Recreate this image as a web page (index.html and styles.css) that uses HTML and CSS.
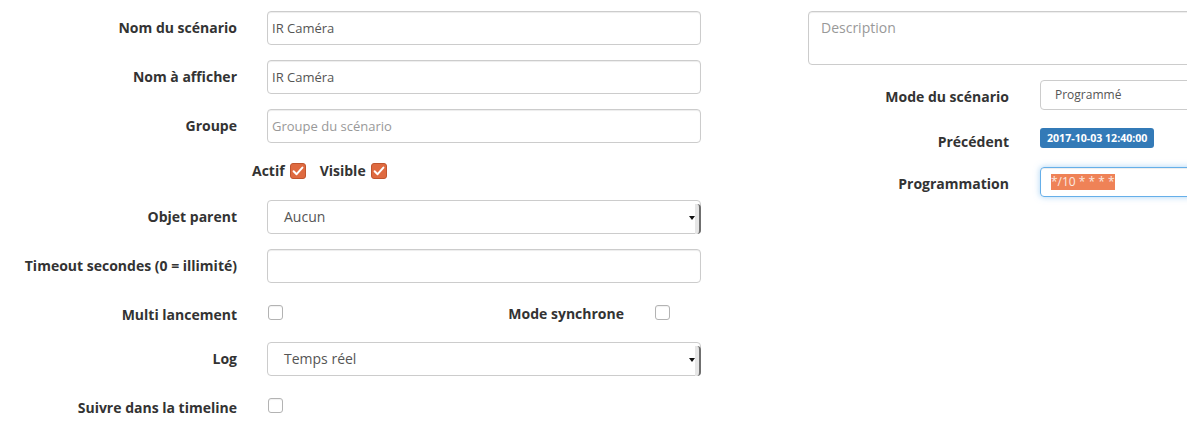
FILE: index.html
```html
<!DOCTYPE html>
<html lang="fr">
<head>
<meta charset="utf-8">
<title>Scénario</title>
<link rel="stylesheet" href="styles.css">
</head>
<body>
<div class="page">
  <div class="left">
    <div class="row">
      <label class="lbl">Nom du scénario</label>
      <div class="ctl"><input class="input" type="text" value="IR Caméra"></div>
    </div>
    <div class="row">
      <label class="lbl">Nom à afficher</label>
      <div class="ctl"><input class="input" type="text" value="IR Caméra"></div>
    </div>
    <div class="row">
      <label class="lbl">Groupe</label>
      <div class="ctl"><input class="input" type="text" placeholder="Groupe du scénario"></div>
    </div>
    <div class="row row-checks">
      <span class="inline-lbl">Actif</span>
      <span class="cb checked"><svg viewBox="0 0 16 16" width="16" height="16"><path d="M3.6 8.2 L6.6 11.2 L12.4 4.6" fill="none" stroke="#fff" stroke-width="2" stroke-linecap="round" stroke-linejoin="round"/></svg></span>
      <span class="inline-lbl second">Visible</span>
      <span class="cb checked"><svg viewBox="0 0 16 16" width="16" height="16"><path d="M3.6 8.2 L6.6 11.2 L12.4 4.6" fill="none" stroke="#fff" stroke-width="2" stroke-linecap="round" stroke-linejoin="round"/></svg></span>
    </div>
    <div class="row">
      <label class="lbl">Objet parent</label>
      <div class="ctl"><div class="select">Aucun</div></div>
    </div>
    <div class="row">
      <label class="lbl">Timeout secondes (0 = illimité)</label>
      <div class="ctl"><input class="input" type="text" value=""></div>
    </div>
    <div class="row row-cb">
      <label class="lbl">Multi lancement</label>
      <div class="ctl ctl-cb">
        <span class="cb"></span>
        <span class="spacer"></span>
        <span class="sub-lbl">Mode synchrone</span>
        <span class="cb cb-sync"></span>
      </div>
    </div>
    <div class="row">
      <label class="lbl">Log</label>
      <div class="ctl"><div class="select">Temps réel</div></div>
    </div>
    <div class="row row-cb">
      <label class="lbl">Suivre dans la timeline</label>
      <div class="ctl ctl-cb"><span class="cb"></span></div>
    </div>
  </div>
  <div class="right">
    <div class="desc">Description</div>
    <div class="rrow">
      <label class="rlbl">Mode du scénario</label>
      <div class="rselect">Programmé</div>
    </div>
    <div class="rrow">
      <label class="rlbl">Précédent</label>
      <div><span class="badge">2017-10-03 12:40:00</span></div>
    </div>
    <div class="rrow">
      <label class="rlbl">Programmation</label>
      <div class="rinput focus"><span class="sel">*/10 * * * *</span></div>
    </div>
  </div>
</div>
</body>
</html>
```

FILE: styles.css
```css
html, body {
  margin: 0;
  padding: 0;
  background: #fff;
}
body {
  font-family: "Open Sans", "DejaVu Sans", sans-serif;
  color: #333;
  overflow: hidden;
}
.page {
  display: flex;
  padding-top: 11px;
  width: 1187px;
  height: 430px;
  box-sizing: border-box;
  overflow: hidden;
}
.left {
  width: 716px;
  flex: 0 0 716px;
}
.row {
  display: flex;
  margin-bottom: 15px;
}
.lbl {
  flex: 0 0 237px;
  width: 237px;
  text-align: right;
  font-weight: 700;
  font-size: 14px;
  line-height: 20px;
  padding-top: 7px;
  margin-right: 30px;
  white-space: nowrap;
}
.ctl {
  flex: 0 0 434px;
  width: 434px;
}
.input {
  display: block;
  width: 100%;
  height: 34px;
  margin: 0;
  box-sizing: border-box;
  border: 1px solid #ccc;
  border-radius: 4px;
  padding: 0 4px;
  font-family: "Open Sans", sans-serif;
  font-size: 13px;
  color: #555;
  background: #fff;
  box-shadow: inset 0 1px 1px rgba(0,0,0,.075);
  outline: none;
}
.input::placeholder {
  color: #999;
}
.select {
  position: relative;
  height: 34px;
  box-sizing: border-box;
  border: 1px solid #ccc;
  border-radius: 4px;
  padding-left: 16px;
  font-size: 14px;
  line-height: 32px;
  color: #555;
  background: #fff;
}
.select::before {
  content: "";
  position: absolute;
  right: -1px;
  top: 3px;
  bottom: -1px;
  width: 4px;
  background: #e6e6e6;
  border-right: 2px solid #6f6f6f;
  border-radius: 0 4px 4px 0;
}
.select::after {
  content: "";
  position: absolute;
  right: 5px;
  top: 15px;
  border-left: 3px solid transparent;
  border-right: 3px solid transparent;
  border-top: 4px solid #111;
}
.row-checks {
  height: 27px;
  align-items: center;
  padding-left: 252px;
  margin-top: -1px;
  margin-bottom: 16px;
}
.inline-lbl {
  font-weight: 700;
  font-size: 14px;
  line-height: 20px;
  margin-right: 5px;
}
.inline-lbl.second {
  margin-left: 14px;
}
.cb {
  display: inline-block;
  width: 15px;
  height: 15px;
  box-sizing: border-box;
  border: 1px solid #b3b3b3;
  border-radius: 3px;
  background: #fff;
  box-shadow: inset 0 1px 1px rgba(0,0,0,.06);
  flex: 0 0 auto;
}
.cb.checked {
  width: 16px;
  height: 16px;
  background: #df6a40;
  border-color: #c0552f;
  box-shadow: none;
}
.cb.checked svg {
  display: block;
  margin: -1px;
}
.row-cb {
  height: 29px;
}
.ctl-cb {
  display: flex;
  align-items: flex-start;
  padding-top: 7px;
  padding-left: 1px;
  box-sizing: border-box;
}
.spacer {
  flex: 1;
}
.sub-lbl {
  font-weight: 700;
  font-size: 14px;
  line-height: 20px;
  margin-top: -1px;
  margin-right: 31px;
}
.cb-sync {
  margin-right: 31px;
}
.right {
  margin-left: 92px;
  flex: 0 0 420px;
  width: 420px;
}
.desc {
  height: 54px;
  box-sizing: border-box;
  border: 1px solid #ccc;
  border-radius: 4px;
  padding: 6px 12px;
  font-size: 14px;
  line-height: 20px;
  color: #999;
  margin-bottom: 15px;
  box-shadow: inset 0 1px 1px rgba(0,0,0,.075);
}
.rrow {
  display: flex;
  margin-bottom: 15px;
}
.rlbl {
  flex: 0 0 201px;
  width: 201px;
  text-align: right;
  font-weight: 700;
  font-size: 14px;
  line-height: 20px;
  padding-top: 7px;
  margin-right: 31px;
  white-space: nowrap;
}
.rselect {
  flex: 0 0 200px;
  height: 30px;
  box-sizing: border-box;
  border: 1px solid #ccc;
  border-radius: 4px;
  padding-left: 14px;
  font-size: 12px;
  line-height: 28px;
  color: #555;
}
.badge {
  display: inline-block;
  margin-top: 1px;
  height: 20px;
  line-height: 20px;
  padding: 0 7px;
  border-radius: 3px;
  background: #337ab7;
  color: #fff;
  font-weight: 700;
  font-size: 10.6px;
}
.rinput {
  flex: 0 0 200px;
  height: 30px;
  box-sizing: border-box;
  border: 1px solid #66afe9;
  border-radius: 4px;
  padding-left: 10px;
  padding-top: 6px;
  box-shadow: inset 0 1px 1px rgba(0,0,0,.075), 0 0 6px rgba(102,175,233,.55);
  font-size: 12px;
}
.sel {
  display: inline-block;
  height: 16px;
  line-height: 16px;
  background: #ef8257;
  color: #fbe9e1;
  white-space: pre;
  vertical-align: top;
}
```
